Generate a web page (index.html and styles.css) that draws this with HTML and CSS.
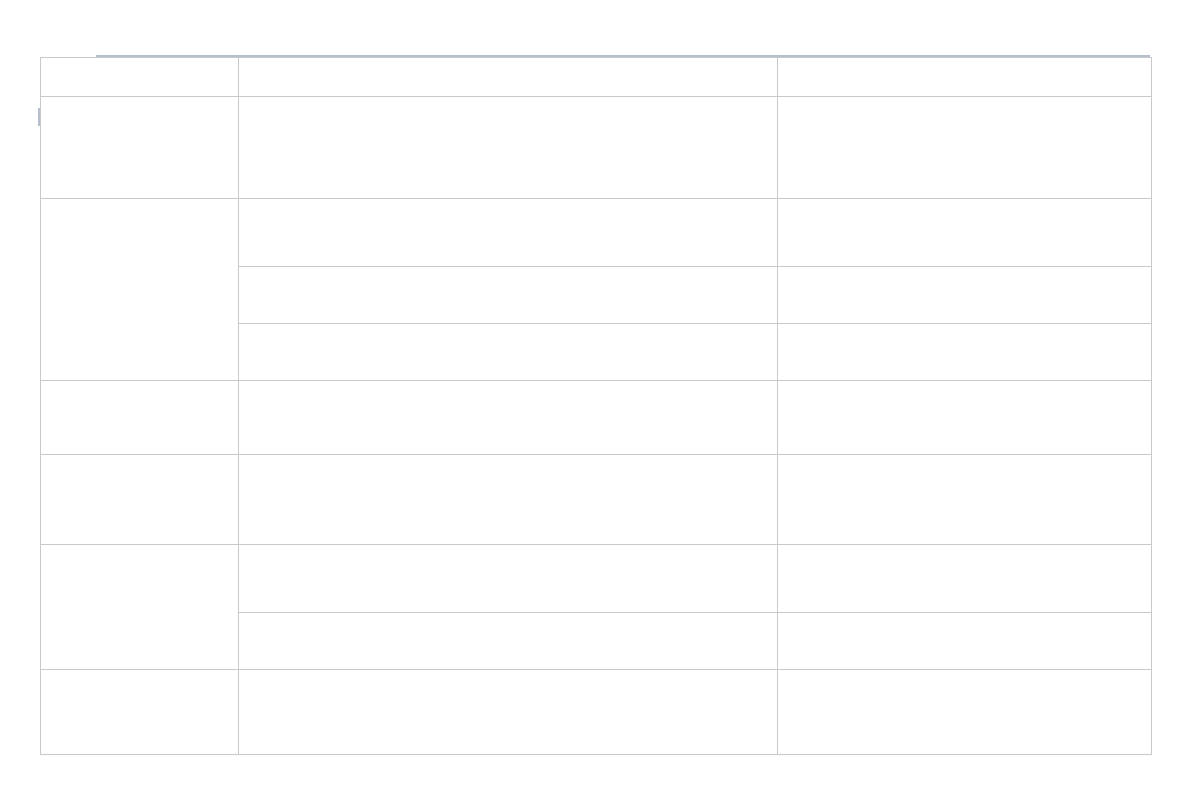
FILE: index.html
```html
<!DOCTYPE html>
<html>
<head>
<meta charset="utf-8">
<link rel="stylesheet" href="styles.css">
</head>
<body>
<div class="page">
  <div class="hbar"></div>
  <div class="frame">
    <div class="vbar"></div>
    <div class="grid">
      <div class="c h1"></div><div class="c h1"></div><div class="c h1"></div>
      <div class="c"></div><div class="c"></div><div class="c"></div>
      <div class="c span3"></div><div class="c"></div><div class="c"></div>
      <div class="c"></div><div class="c"></div>
      <div class="c"></div><div class="c"></div>
      <div class="c"></div><div class="c"></div><div class="c"></div>
      <div class="c"></div><div class="c"></div><div class="c"></div>
      <div class="c span2"></div><div class="c"></div><div class="c"></div>
      <div class="c"></div><div class="c"></div>
      <div class="c"></div><div class="c"></div><div class="c"></div>
    </div>
  </div>
</div>
</body>
</html>
```
FILE: styles.css
```css
html, body {
  margin: 0;
  padding: 0;
  background: #ffffff;
  font-family: "Liberation Sans", Arial, sans-serif;
}
.page {
  padding-top: 55px;
  padding-left: 40px;
}
.hbar {
  margin-left: 56px;
  width: 1054px;
  height: 2px;
  background: #b7bfcc;
}
.frame {
  position: relative;
  width: 1112px;
}
.vbar {
  position: absolute;
  left: -2px;
  top: 51px;
  width: 2px;
  height: 18px;
  background: #b7bfcc;
}
.grid {
  display: grid;
  grid-template-columns: 197px 538px 373px;
  grid-template-rows: 38px 101px 67px 56px 56px 73px 89px 67px 56px 84px;
  gap: 1px;
  padding: 1px;
  background: #c9c9c9;
}
.c {
  background: #ffffff;
}
.span3 {
  grid-row: span 3;
}
.span2 {
  grid-row: span 2;
}
```
